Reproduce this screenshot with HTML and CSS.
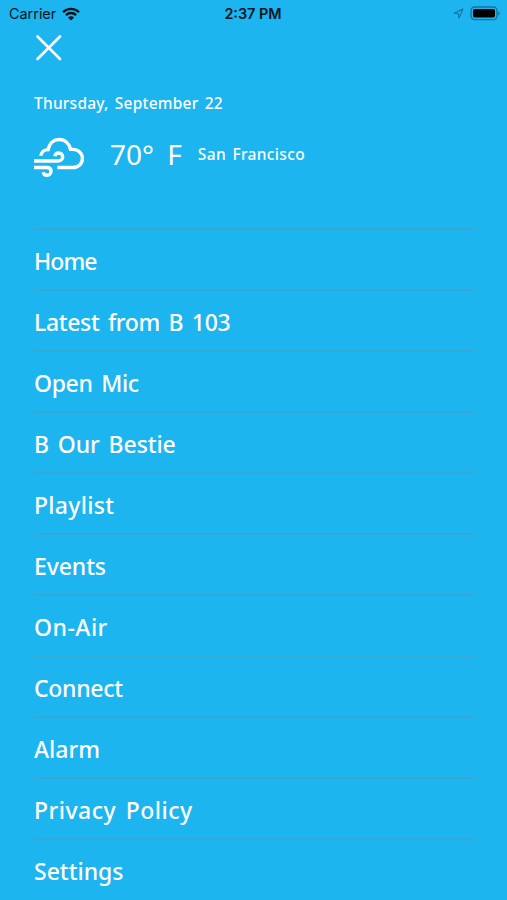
FILE: index.html
```
<!DOCTYPE html>
<html lang="en">
<head>
    <meta charset="UTF-8">
    <meta name="viewport" content="width=device-width, initial-scale=1.0">
    <title>Menu</title>
    <link rel="stylesheet" href="styles.css">
</head>
<body>

    <header class="status-bar">
        <div class="status-left">
            <span>Carrier</span>
            <svg class="wifi" width="18" height="14" viewBox="0 0 18 14">
                <path d="M1 5.2C5.6 .7 12.4 .7 17 5.2M3.9 8.1C6.8 5.3 11.2 5.3 14.1 8.1" fill="none" stroke="#02141c" stroke-width="2.3"/>
                <path d="M5.9 10.4C7.7 8.7 10.3 8.7 12.1 10.4L9 13.6Z" fill="#02141c"/>
            </svg>
        </div>
        <div class="status-time">2:37 PM</div>
        <div class="status-right">
            <svg width="11" height="11" viewBox="0 0 11 11">
                <path d="M1 5.2L10 1L6 10L5.4 5.7Z" fill="none" stroke="#157699" stroke-width="1.1" stroke-linejoin="round"/>
            </svg>
            <svg class="battery" width="31" height="15" viewBox="0 0 31 15">
                <rect x="1" y="1" width="26" height="12.6" rx="3.6" fill="none" stroke="#147499" stroke-width="1.3"/>
                <rect x="3" y="3" width="22" height="8.6" rx="1.8" fill="#000"/>
                <path d="M28.3 5.2C30.3 6 30.3 8.6 28.3 9.4Z" fill="#147499"/>
            </svg>
        </div>
    </header>

    <main class="menu">
        <button class="close-btn" aria-label="Close">
            <svg width="26" height="26" viewBox="0 0 26 26">
                <path d="M1.5 1.5L24 24M24 1.5L1.5 24" fill="none" stroke="#fff" stroke-width="2.6" stroke-linecap="round"/>
            </svg>
        </button>

        <p class="date">Thursday, September 22</p>

        <div class="weather">
            <svg class="weather-icon" width="52" height="42" viewBox="0 0 52 42">
                <g fill="none" stroke="#fff" stroke-width="3.4">
                    <path d="M6.7 19.8C7.3 16.2 10.4 13.6 14.2 13.6C15.2 7.2 19.8 3.5 25.2 3.5C31 3.5 35.3 7.3 36.5 13.4H38.8C44.4 13.4 48.4 17.3 48.4 22.4C48.4 27.6 44.4 31.5 38.8 31.5H23.3"/>
                    <path d="M0 25H23.8C26.9 25 28.7 23.2 28.7 20.9C28.7 18.5 26.9 17 24.7 17C22.6 17 21.2 18.3 20.9 20.2"/>
                    <path d="M0 31.5H12.8C15.4 31.5 17 33.1 17 35.3C17 37.6 15.4 39.3 13.1 39.3C11 39.3 9.6 38.1 9.3 36.2"/>
                </g>
            </svg>
            <span class="temp">70° F</span>
            <span class="city">San Francisco</span>
        </div>

        <ul class="menu-list">
            <li class="home">Home</li>
            <li class="latest">Latest from B 103</li>
            <li class="mic">Open Mic</li>
            <li class="bestie">B Our Bestie</li>
            <li class="playlist">Playlist</li>
            <li class="events">Events</li>
            <li class="on-air">On-Air</li>
            <li class="connect">Connect</li>
            <li class="alarm">Alarm</li>
            <li class="privacy">Privacy Policy</li>
            <li class="settings">Settings</li>
        </ul>
    </main>

</body>
</html>
```
FILE: styles.css
```
* {
    margin: 0;
    padding: 0;
    box-sizing: border-box;
}

body {
    font-family: "Noto Sans", sans-serif;
    background-color: #1cb5f0;
    color: #fff;
    height: 900px;
    overflow: hidden;
}

.status-bar {
    display: grid;
    grid-template-columns: 1fr auto 1fr;
    align-items: center;
    height: 27px;
    padding: 0 6px 0 9px;
    font-family: Inter, sans-serif;
    font-size: 14.4px;
    color: #02141c;
}

.status-left, .status-right {
    display: flex;
    align-items: center;
    gap: 6px;
}

.status-right {
    justify-content: flex-end;
}

.status-time {
    font-weight: 600;
    padding-right: 4px;
}

.menu {
    padding: 8px 32px 0 34px;
}

.close-btn {
    display: block;
    width: 28px;
    height: 27px;
    background: none;
    border: none;
    cursor: pointer;
    padding-left: 1px;
}

.date {
    margin-top: 29px;
    font-size: 15.5px;
    font-weight: 500;
    line-height: 24px;
    letter-spacing: 0.23px;
    word-spacing: 2px;
}

.weather {
    display: flex;
    height: 42px;
    margin-top: 21px;
    line-height: 37px;
}

.temp {
    margin-left: 24px;
    font-size: 28px;
    word-spacing: 6px;
}

.city {
    margin-left: 16px;
    font-size: 15.5px;
    font-weight: 500;
    letter-spacing: 0.35px;
    word-spacing: 2px;
}

.menu-list {
    list-style: none;
    margin-top: 50px;
}

.menu-list li {
    height: 61.05px;
    border-top: 2px solid #37a8d2;
    font-size: 23px;
    font-weight: 500;
    line-height: 62px;
    word-spacing: 3px;
    white-space: nowrap;
}

.home {
    letter-spacing: -0.9px;
}

.latest, .mic {
    letter-spacing: -0.35px;
}

.bestie, .events {
    letter-spacing: -0.1px;
}

.connect {
    letter-spacing: -0.3px;
}

.playlist {
    letter-spacing: 0.3px;
}

.on-air, .privacy {
    letter-spacing: 0.5px;
}
```
